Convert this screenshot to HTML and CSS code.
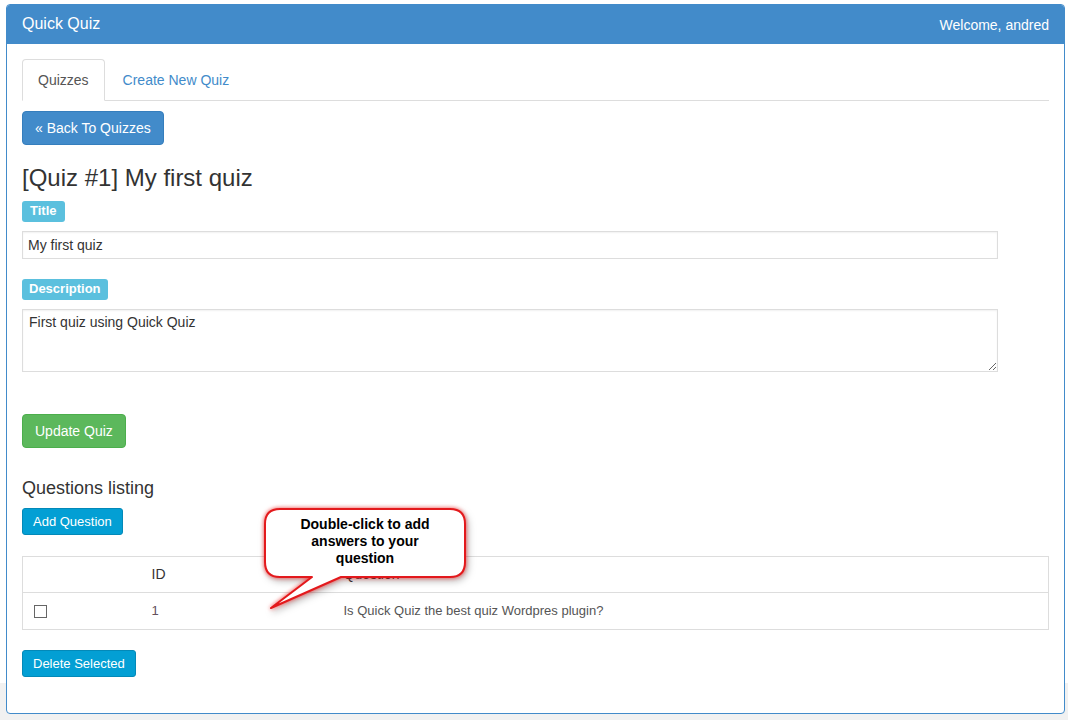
FILE: index.html
```html
<!DOCTYPE html>
<html>
<head>
<meta charset="utf-8">
<title>Quick Quiz</title>
<link rel="stylesheet" href="styles.css">
</head>
<body>
<div class="page">
  <div class="panel">
    <div class="panel-heading">
      <span class="brand">Quick Quiz</span>
      <span class="welcome">Welcome, andred</span>
    </div>
    <div class="panel-body">
      <ul class="nav-tabs">
        <li class="tab active"><a>Quizzes</a></li>
        <li class="tab"><a>Create New Quiz</a></li>
      </ul>
      <div class="back-row"><button class="btn btn-primary">« Back To Quizzes</button></div>
      <h3 class="quiz-title">[Quiz #1] My first quiz</h3>
      <span class="label">Title</span>
      <input class="form-input" type="text" value="My first quiz">
      <span class="label label-desc">Description</span>
      <textarea class="form-textarea">First quiz using Quick Quiz</textarea>
      <div class="update-row"><button class="btn btn-success">Update Quiz</button></div>
      <h4 class="section-title">Questions listing</h4>
      <div><button class="btn btn-sm btn-info">Add Question</button></div>
      <table class="table">
        <thead>
          <tr><th class="col-check"></th><th class="col-id">ID</th><th>Question</th></tr>
        </thead>
        <tbody>
          <tr><td class="col-check"><span class="checkbox"></span></td><td class="col-id id-cell">1</td><td class="q-cell">Is Quick Quiz the best quiz Wordpres plugin?</td></tr>
        </tbody>
      </table>
      <div><button class="btn btn-sm btn-info">Delete Selected</button></div>

      <svg class="callout-shape" width="225" height="120" viewBox="257 500 225 120">
        <path d="M280 509 H450 Q465 509 465 524 V562 Q465 577 450 577 H341 L271 608 L312 577 H280 Q265 577 265 562 V524 Q265 509 280 509 Z" fill="#ffffff" stroke="#e3191c" stroke-width="2" stroke-linejoin="round"/>
      </svg>
      <div class="callout-text">Double-click to add<br>answers to your<br>question</div>
    </div>
  </div>
</div>
</body>
</html>
```

FILE: styles.css
```css
* { box-sizing: border-box; }

html, body {
  margin: 0;
  padding: 0;
}

body {
  font-family: "Liberation Sans", Arial, sans-serif;
  font-size: 14px;
  line-height: 20px;
  color: #333333;
  background: linear-gradient(#ffffff 0, #ffffff 683px, #f1f1f1 683px);
  height: 720px;
}

.page {
  padding: 4px 3px 0 6px;
}

.panel {
  border: 1px solid #428bca;
  border-radius: 4px;
  background: #ffffff;
  overflow: hidden;
}

.panel-heading {
  background: #428bca;
  color: #ffffff;
  height: 39px;
  padding: 0 15px;
  display: flex;
  justify-content: space-between;
  align-items: center;
}

.brand {
  font-size: 16px;
  line-height: 20px;
  padding-bottom: 1px;
}

.welcome {
  font-size: 14px;
  line-height: 20px;
}

.panel-body {
  position: relative;
  padding: 15px 15px 36px 15px;
}

.nav-tabs {
  list-style: none;
  margin: 0;
  padding: 0;
  display: flex;
  border-bottom: 1px solid #dddddd;
}

.tab {
  margin-bottom: -1px;
  margin-right: 2px;
}

.tab a {
  display: block;
  padding: 10px 15px;
  line-height: 20px;
  border: 1px solid transparent;
  border-radius: 4px 4px 0 0;
  color: #428bca;
}

.tab.active a {
  color: #555555;
  background: #ffffff;
  border-color: #dddddd #dddddd transparent #dddddd;
}

.back-row {
  margin-top: 10px;
}

.btn {
  display: inline-block;
  font-family: "Liberation Sans", Arial, sans-serif;
  font-size: 14px;
  line-height: 20px;
  padding: 6px 12px;
  border: 1px solid transparent;
  border-radius: 4px;
  color: #ffffff;
  margin: 0;
}

.btn-primary {
  background: #428bca;
  border-color: #357ebd;
}

.btn-success {
  background: #5cb85c;
  border-color: #4cae4c;
}

.btn-sm {
  font-size: 13px;
  line-height: 17px;
  padding: 4px 10px;
  border-radius: 3px;
}

.btn-info {
  background: #039fd4;
  border-color: #0389b8;
}

.quiz-title {
  font-size: 24px;
  font-weight: 400;
  line-height: 26px;
  margin: 20px 0 9px 0;
  color: #333333;
}

.label {
  display: inline-block;
  background: #5bc0de;
  color: #ffffff;
  font-weight: 700;
  font-size: 13px;
  line-height: 14px;
  padding: 3px 8px 4px 8px;
  border-radius: 3px;
}

.form-input {
  display: block;
  width: 95%;
  height: 28px;
  margin-top: 9px;
  padding: 3px 5px;
  font-family: "Liberation Sans", Arial, sans-serif;
  font-size: 14px;
  color: #333333;
  border: 1px solid #dddddd;
  box-shadow: inset 0 1px 2px rgba(0, 0, 0, 0.06);
  outline: none;
}

.label-desc {
  margin-top: 20px;
  padding-left: 7px;
  padding-right: 7px;
}

.form-textarea {
  display: block;
  width: 95%;
  height: 63px;
  margin-top: 9px;
  padding: 3px 6px;
  font-family: "Liberation Sans", Arial, sans-serif;
  font-size: 14px;
  line-height: 18px;
  color: #333333;
  border: 1px solid #dddddd;
  box-shadow: inset 0 1px 2px rgba(0, 0, 0, 0.06);
  resize: vertical;
  outline: none;
}

.update-row {
  margin-top: 42px;
}

.section-title {
  font-size: 18px;
  font-weight: 400;
  line-height: 20px;
  margin: 30px 0 10px 0;
  color: #333333;
}

.table {
  width: 100%;
  border-collapse: collapse;
  border: 1px solid #dddddd;
  margin: 21px 0 20px 0;
}

.table th,
.table td {
  padding: 8px;
  line-height: 20px;
  text-align: left;
  font-weight: 400;
  border-top: 1px solid #dddddd;
  vertical-align: top;
}

.table th {
  color: #333333;
  font-size: 14px;
  line-height: 19px;
}

.table td {
  font-size: 13px;
}

.col-check {
  width: 121px;
}

.col-id {
  width: 192px;
}

.id-cell {
  color: #64505c;
}

.q-cell {
  color: #555555;
}

.checkbox {
  display: block;
  width: 13px;
  height: 13px;
  margin: 4px 0 0 3px;
  border: 1px solid #666666;
  background: #ffffff;
}

.callout-shape {
  position: absolute;
  left: 250px;
  top: 456px;
  overflow: visible;
  filter: drop-shadow(0 0 2px rgba(255, 30, 30, 0.75)) drop-shadow(2px 3px 3px rgba(0, 0, 0, 0.25));
}

.callout-text {
  position: absolute;
  left: 258px;
  top: 465px;
  width: 200px;
  padding-top: 7px;
  text-align: center;
  font-weight: 700;
  font-size: 14px;
  line-height: 17px;
  color: #000000;
}
```
